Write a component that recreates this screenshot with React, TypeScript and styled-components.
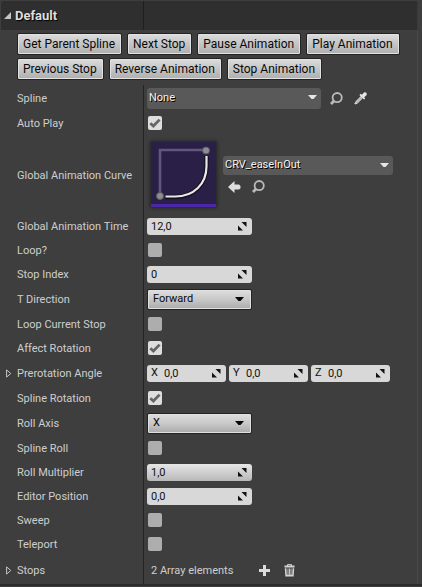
import React, { useId, useState } from 'react';
import styled, { createGlobalStyle } from 'styled-components';

const GlobalStyle = createGlobalStyle`
  *, *::before, *::after { box-sizing: border-box; }
  body {
    margin: 0;
    background: #3e3e3e;
    color: #cecece;
    font: 11px/16px Roboto, "Liberation Sans", sans-serif;
  }
  button, input, select { font: inherit; margin: 0; }
  svg { display: block; flex: none; }
`;

const Panel = styled.main`
  padding: 1px 4px 0 1px;
  border-bottom: 2px solid #2c2a2b;
`;

const Body = styled.div`
  border-right: 1px solid #494949;
`;

const Header = styled.h2`
  display: grid;
  grid-template-columns: 143px 1fr;
  height: 29px;
  margin: 0;
  background: #2f2f2f;
  border-right: 1px solid #3a3a3a;
  border-top-left-radius: 3px;
`;

const HeaderToggle = styled.button`
  display: flex;
  align-items: center;
  gap: 4px;
  padding: 0 0 0 3px;
  border: 0;
  border-right: 1px solid #1f1f1f;
  background: none;
  color: #dedede;
  font-size: 13px;
  font-weight: 700;
  text-shadow: 1px 1px 1px #000;
`;

const Actions = styled.div`
  display: flex;
  flex-wrap: wrap;
  gap: 3px 5px;
  padding: 3px 0 5px 16px;
`;

const ActionButton = styled.button`
  height: 22px;
  padding: 0 6px 0 5px;
  border: 1px solid #232323;
  border-radius: 2px;
  background: linear-gradient(#dcdcdc, #aeaeae);
  box-shadow: inset 0 0 0 1px #e2e2e2;
  color: #080808;
  font-size: 12px;
  line-height: 20px;
  white-space: nowrap;
`;

const RowBox = styled.div<{ $height: number }>`
  display: grid;
  grid-template-columns: 143px 1fr;
  min-height: ${(p) => p.$height}px;
`;

const NameCell = styled.div`
  display: flex;
  align-items: center;
  padding-top: 2px;
  border-right: 1px solid #232323;
`;

const Expander = styled.button`
  display: flex;
  width: 16px;
  padding: 0 0 2px 5px;
  border: 0;
  background: none;
`;

const Name = styled.label<{ $indent: boolean }>`
  padding-left: ${(p) => (p.$indent ? 16 : 0)}px;
  white-space: nowrap;
`;

const ValueCell = styled.div<{ $gap?: number }>`
  display: flex;
  align-items: center;
  gap: ${(p) => p.$gap ?? 3}px;
  padding-left: 3px;
`;

const CheckBox = styled.span`
  display: grid;
  margin-left: 1px;
  & > * { grid-area: 1 / 1; }
  & > svg { pointer-events: none; }
`;

const CheckInput = styled.input`
  appearance: none;
  width: 14px;
  height: 14px;
  border-radius: 2px;
  background: #adadad;
  &:checked { background: #dedede; }
`;

const Field = styled.div<{ $width: number; $lit?: boolean }>`
  display: flex;
  align-items: center;
  width: ${(p) => p.$width}px;
  height: 17px;
  padding: 0 5px 0 4px;
  border-radius: 3px;
  background: ${(p) => (p.$lit ? 'linear-gradient(#e6e6e6, #b8b8b8)' : '#d8d8d8')};
  color: #111;
`;

const Axis = styled.label`
  width: 9px;
`;

const FieldInput = styled.input<{ $inset: boolean }>`
  flex: 1;
  min-width: 0;
  height: 17px;
  padding: 0 0 0 ${(p) => (p.$inset ? 4 : 0)}px;
  border: 0;
  outline: 0;
  background: none;
  color: inherit;
`;

const SelectBox = styled.div`
  display: grid;
  align-items: center;
  width: 105px;
  & > * { grid-area: 1 / 1; }
  & > svg { justify-self: end; margin-right: 8px; pointer-events: none; }
`;

const SelectInput = styled.select`
  appearance: none;
  height: 21px;
  padding: 0 20px 0 5px;
  border: 1px solid #232323;
  border-radius: 2px;
  background: linear-gradient(#dedede, #c8c8c8 50%, #aaaaaa);
  box-shadow: inset 0 0 0 1px #e0e0e0;
  color: #080808;
`;

const AssetCombo = styled.button<{ $width: number; $height: number }>`
  display: flex;
  align-items: center;
  justify-content: space-between;
  width: ${(p) => p.$width}px;
  height: ${(p) => p.$height}px;
  padding: 0 4px 1px 2px;
  border: 0;
  border-radius: 3px;
  background: #595959;
  color: #f2f2f2;
  text-shadow: 1px 1px 0 #000;
`;

const IconButton = styled.button`
  display: flex;
  padding: 0;
  border: 0;
  background: none;
`;

const IconRow = styled.div<{ $gap: number; $inset: number }>`
  display: flex;
  align-items: center;
  gap: ${(p) => p.$gap}px;
  padding-left: ${(p) => p.$inset}px;
`;

const Thumbnail = styled.div`
  margin: 0 4px;
  border-bottom: 3px solid #4a27a8;
  background: #2a1f47;
  box-shadow: 0 0 3px 1px #222;
`;

const AssetColumn = styled.div`
  display: flex;
  flex-direction: column;
  gap: 5px;
`;

const Summary = styled.output`
  padding: 1px 0 0 4px;
`;

const Caret = ({ fill = '#e6e6e6' }: { fill?: string }) => (
  <svg width="9" height="5" viewBox="0 0 9 5"><path d="M0 0h9L5.5 4h-2z" fill={fill} /></svg>
);

const SearchIcon = () => (
  <svg width="13" height="13" viewBox="0 0 13 13" fill="none" stroke="#b9b9b9" strokeWidth="1.8">
    <circle cx="7.2" cy="5.6" r="4.6" />
    <path d="M4.2 8.8 1 12" strokeWidth="2.8" />
  </svg>
);

const PipetteIcon = () => (
  <svg width="13" height="13" viewBox="0 0 13 13">
    <path d="M7 4.5 8.5 6 3.4 11.1 1.2 12 .9 11.7l1-2.1z" fill="#b4b4b4" stroke="#dcdcdc" />
    <path d="m5.4 3 1.3-1.2 1.200 1L10 .6C11.800-.4 13.600 1.400 12.400 3.200L10.200 5.200l1 1.200-1.200 1.200z" fill="#e6e6e6" />
  </svg>
);

const ArrowIcon = () => (
  <svg width="13" height="12" viewBox="0 0 13 12">
    <path d="M0 6 6.500 0V3.500h4.500l1.500 1.500v2.200L11 8.500H6.500V12z" fill="#dedede" />
  </svg>
);

const PlusIcon = () => (
  <svg width="11" height="11" viewBox="0 0 11 11"><path d="M4 0h3v4h4v3H7v4H4V7H0V4h4z" fill="#dcdcdc" /></svg>
);

const TrashIcon = () => (
  <svg width="11" height="13" viewBox="0 0 11 13" fill="none" stroke="#d4d4d4">
    <path d="M.5 2.500h10" strokeWidth="2" />
    <path d="M3.500 2V.6h4V2" />
    <path d="M1.600 4.200 2.100 11.600h6.800l.500-7.400" strokeWidth="1.600" />
    <path d="M4 4.500v6.500M5.500 4.500v6.500M7 4.500v6.500" strokeWidth=".9" />
  </svg>
);

const SpinIcon = () => (
  <svg width="9" height="9" viewBox="0 0 9 9">
    <path d="M3.500 0H8.500v5z M0 3.500 5 8.500H0z" fill="#111" />
  </svg>
);

const CheckIcon = () => (
  <svg width="14" height="14" viewBox="0 0 14 14" fill="none" stroke="#666" strokeWidth="2.8">
    <path d="M2.3 7.2 5.4 10 11.6 3.6" />
  </svg>
);

const ExpandIcon = () => (
  <svg width="6" height="9" viewBox="0 0 6 9" fill="none" stroke="#c4c4c4"><path d="M.6.9v7.2L4.8 4.5z" /></svg>
);

const CurveArt = () => (
  <svg width="65" height="62" viewBox="0 0 65 62" fill="none">
    <path d="M9 54V8h46" stroke="#62577c" strokeWidth="2.6" />
    <path d="M14.500 55H24C43 55 55.500 42 55.500 24V14" stroke="#15101f" strokeWidth="4.500" />
    <path d="M14.500 54.500H24C43 54.500 55.500 42 55.500 24V14" stroke="#e8e8e8" strokeWidth="2.200" />
    <circle cx="55" cy="8.500" r="3.500" fill="#8e8e8e" stroke="#5c5c5c" />
    <circle cx="9" cy="54" r="3.500" fill="#8e8e8e" stroke="#5c5c5c" />
  </svg>
);

type RowProps = {
  name: string;
  height?: number;
  gap?: number;
  expandable?: boolean;
  children: (id: string) => React.ReactNode;
};

function Row({ name, height = 24, gap, expandable = false, children }: RowProps) {
  const id = useId();
  return (
    <RowBox $height={height}>
      <NameCell>
        {expandable && <Expander aria-label={`Expand ${name}`}><ExpandIcon /></Expander>}
        <Name htmlFor={id} $indent={!expandable}>{name}</Name>
      </NameCell>
      <ValueCell $gap={gap}>{children(id)}</ValueCell>
    </RowBox>
  );
}

function CheckRow({ name, initial = false }: { name: string; initial?: boolean }) {
  const [checked, setChecked] = useState(initial);
  return (
    <Row name={name}>
      {(id) => (
        <CheckBox>
          <CheckInput id={id} type="checkbox" checked={checked} onChange={(e) => setChecked(e.target.checked)} />
          {checked && <CheckIcon />}
        </CheckBox>
      )}
    </Row>
  );
}

function NumberRow({ name, value, lit }: { name: string; value: string; lit?: boolean }) {
  return (
    <Row name={name}>
      {(id) => (
        <Field $width={105} $lit={lit}>
          <FieldInput id={id} defaultValue={value} inputMode="decimal" $inset={false} />
          <SpinIcon />
        </Field>
      )}
    </Row>
  );
}

function SelectRow({ name, options }: { name: string; options: string[] }) {
  return (
    <Row name={name} height={26}>
      {(id) => (
        <SelectBox>
          <SelectInput id={id}>{options.map((o) => <option key={o}>{o}</option>)}</SelectInput>
          <Caret fill="#080808" />
        </SelectBox>
      )}
    </Row>
  );
}

const actions = [
  'Get Parent Spline', 'Next Stop', 'Pause Animation', 'Play Animation',
  'Previous Stop', 'Reverse Animation', 'Stop Animation',
];

export default function App() {
  return (
    <>
      <GlobalStyle />
      <Panel>
        <Header>
          <HeaderToggle aria-expanded="true">
            <svg width="7" height="7" viewBox="0 0 7 7"><path d="M7 0v7H0z" fill="#c4c4c4" /></svg>
            Default
          </HeaderToggle>
        </Header>
        <Body>
          <Actions>{actions.map((a) => <ActionButton key={a}>{a}</ActionButton>)}</Actions>
          <Row name="Spline" height={26} gap={9}>
            {(id) => (
              <>
                <AssetCombo id={id} $width={174} $height={21}>None<Caret /></AssetCombo>
                <IconRow $gap={11} $inset={0}>
                  <IconButton aria-label="Browse"><SearchIcon /></IconButton>
                  <IconButton aria-label="Pick"><PipetteIcon /></IconButton>
                </IconRow>
              </>
            )}
          </Row>
          <CheckRow name="Auto Play" initial />
          <Row name="Global Animation Curve" height={79}>
            {(id) => (
              <>
                <Thumbnail><CurveArt /></Thumbnail>
                <AssetColumn>
                  <AssetCombo id={id} $width={170} $height={19}>CRV_easeInOut<Caret /></AssetCombo>
                  <IconRow $gap={11} $inset={5}>
                    <IconButton aria-label="Use selected"><ArrowIcon /></IconButton>
                    <IconButton aria-label="Browse"><SearchIcon /></IconButton>
                  </IconRow>
                </AssetColumn>
              </>
            )}
          </Row>
          <NumberRow name="Global Animation Time" value="12,0" />
          <CheckRow name="Loop?" />
          <NumberRow name="Stop Index" value="0" />
          <SelectRow name="T Direction" options={['Forward', 'Backward']} />
          <CheckRow name="Loop Current Stop" />
          <CheckRow name="Affect Rotation" initial />
          <Row name="Prerotation Angle" height={26} expandable>
            {(id) => ['X', 'Y', 'Z'].map((axis, i) => {
              const fieldId = i === 0 ? id : `${id}-${axis}`;
              return (
                <Field key={axis} $width={79}>
                  <Axis htmlFor={fieldId}>{axis}</Axis>
                  <FieldInput id={fieldId} defaultValue="0,0" inputMode="decimal" $inset />
                  <SpinIcon />
                </Field>
              );
            })}
          </Row>
          <CheckRow name="Spline Rotation" initial />
          <SelectRow name="Roll Axis" options={['X', 'Y', 'Z']} />
          <CheckRow name="Spline Roll" />
          <NumberRow name="Roll Multiplier" value="1,0" lit />
          <NumberRow name="Editor Position" value="0,0" />
          <CheckRow name="Sweep" />
          <CheckRow name="Teleport" />
          <Row name="Stops" height={28} gap={26} expandable>
            {(id) => (
              <>
                <Summary id={id}>2 Array elements</Summary>
                <IconRow $gap={14} $inset={0}>
                  <IconButton aria-label="Add element"><PlusIcon /></IconButton>
                  <IconButton aria-label="Remove all elements"><TrashIcon /></IconButton>
                </IconRow>
              </>
            )}
          </Row>
        </Body>
      </Panel>
    </>
  );
}
